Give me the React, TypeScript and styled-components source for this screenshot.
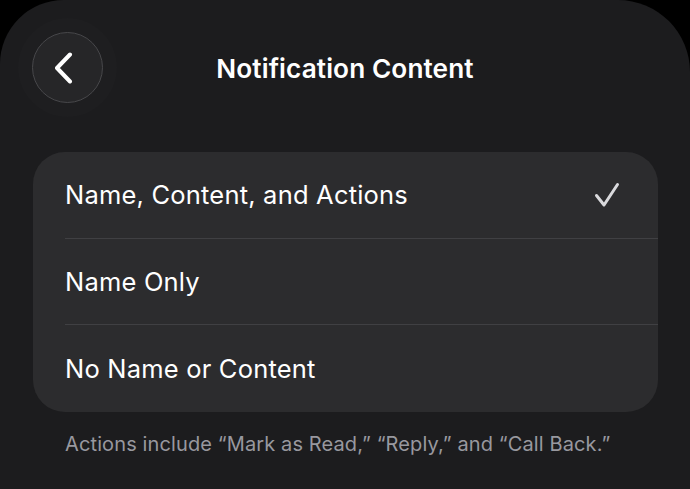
import React from "react";
import styled, { createGlobalStyle } from "styled-components";

const Global = createGlobalStyle`
  html, body { margin: 0; padding: 0; background: #000; }
  body { font-family: Inter, "Noto Sans", "Liberation Sans", sans-serif; -webkit-font-smoothing: antialiased; }
`;

const Screen = styled.div`
  width: 690px;
  height: 489px;
  background: #1c1c1e;
  border-radius: 64px 72px 0 0;
  overflow: hidden;
  box-sizing: border-box;
  display: flex;
  flex-direction: column;
`;

const Header = styled.div`
  position: relative;
  height: 136px;
  display: flex;
  align-items: center;
  justify-content: center;
  box-sizing: border-box;
`;

const BackButton = styled.button`
  position: absolute;
  left: 32px;
  top: 32px;
  width: 71px;
  height: 71px;
  border-radius: 50%;
  border: 1.5px solid #48484b;
  background: #262628;
  box-shadow: 0 0 0 14px rgba(255, 255, 255, 0.012);
  padding: 0;
  display: flex;
  align-items: center;
  justify-content: center;
  box-sizing: border-box;
`;

const Title = styled.h1`
  margin: 0;
  color: #fff;
  font-size: 26.2px;
  font-weight: 600;
  letter-spacing: 0.1px;
`;

const Card = styled.div`
  margin: 16px 32px 0 33px;
  background: #2c2c2e;
  border-radius: 32px;
  overflow: hidden;
`;

const Row = styled.div<{ $last?: boolean }>`
  height: 86.5px;
  margin-left: 32px;
  padding-right: 38px;
  display: flex;
  align-items: center;
  justify-content: space-between;
  box-sizing: border-box;
  border-bottom: ${(p) => (p.$last ? "none" : "1px solid #404043")};
`;

const RowLabel = styled.span`
  color: #fff;
  font-size: 25.5px;
  font-weight: 400;
  letter-spacing: 0.2px;
`;

const Footer = styled.p`
  margin: 20px 0 0 65px;
  color: #98989f;
  font-size: 20px;
  font-weight: 400;
  letter-spacing: 0.12px;
`;

const Check = () => (
  <svg width="26" height="26" viewBox="0 0 26 26" style={{ display: "block" }}>
    <path
      d="M2.5 13.5 L10 23 L23.5 2.5"
      fill="none"
      stroke="#d9d9dc"
      strokeWidth="3"
      strokeLinecap="round"
      strokeLinejoin="round"
    />
  </svg>
);

const Chevron = () => (
  <svg width="20" height="32" viewBox="0 0 20 32" style={{ display: "block", marginLeft: -6 }}>
    <path
      d="M15 2.5 L2 16 L15 29.5"
      fill="none"
      stroke="#ffffff"
      strokeWidth="4"
      strokeLinecap="round"
      strokeLinejoin="round"
    />
  </svg>
);

const options = [
  { label: "Name, Content, and Actions", selected: true },
  { label: "Name Only", selected: false },
  { label: "No Name or Content", selected: false },
];

export default function App() {
  return (
    <>
      <Global />
      <Screen>
        <Header>
          <BackButton aria-label="Back">
            <Chevron />
          </BackButton>
          <Title>Notification Content</Title>
        </Header>
        <Card>
          {options.map((o, i) => (
            <Row key={o.label} $last={i === options.length - 1}>
              <RowLabel>{o.label}</RowLabel>
              {o.selected && <Check />}
            </Row>
          ))}
        </Card>
        <Footer>Actions include “Mark as Read,” “Reply,” and “Call Back.”</Footer>
      </Screen>
    </>
  );
}
